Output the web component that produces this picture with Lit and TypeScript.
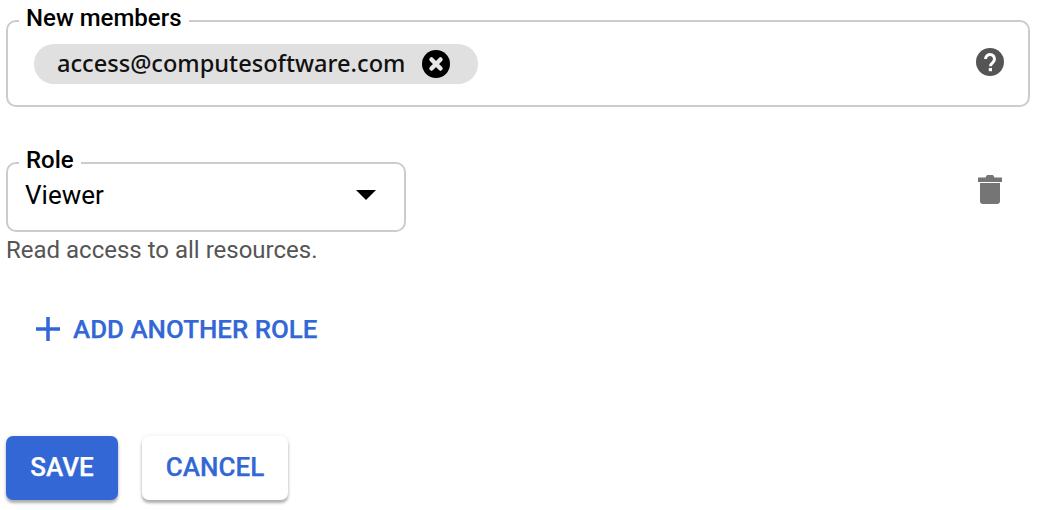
import { LitElement, html, css } from 'lit';
import { customElement } from 'lit/decorators.js';

@customElement('app-root')
export class AppRoot extends LitElement {
  static styles = css`
    :host {
      display: block;
      width: 1040px;
      height: 510px;
      overflow: hidden;
      background: #ffffff;
      font-family: Roboto, "Liberation Sans", sans-serif;
      color: #000000;
    }

    .page {
      display: flex;
      flex-direction: column;
      padding: 6px 10px 0 6px;
    }

    fieldset {
      margin: 0;
      min-width: 0;
      border: 2px solid #cccccc;
      border-radius: 10px;
    }

    legend {
      padding: 0 7px 6px 7px;
      font-size: 24px;
      line-height: 24px;
      font-weight: 500;
    }

    .members {
      display: flex;
      align-items: center;
      justify-content: space-between;
      height: 101px;
      box-sizing: border-box;
      padding: 8px 24px 0 26px;
    }

    .members legend {
      margin-left: -15px;
    }

    .chip {
      display: flex;
      align-items: center;
      gap: 17px;
      height: 40px;
      padding: 0 28px 0 23px;
      border-radius: 20px;
      background: #e0e0e0;
      font-family: "Noto Sans", sans-serif;
      font-size: 23.6px;
      font-weight: 500;
      color: #111111;
    }

    .chip-text {
      padding-bottom: 3px;
    }

    .help {
      margin-bottom: 4px;
    }

    .role-row {
      display: flex;
      align-items: flex-start;
      justify-content: space-between;
      margin-top: 41px;
      padding-right: 28px;
    }

    .role {
      display: flex;
      align-items: center;
      justify-content: space-between;
      width: 400px;
      height: 84px;
      box-sizing: border-box;
      padding: 0 28px 18px 17px;
    }

    .role legend {
      margin-left: -6px;
    }

    .viewer {
      font-size: 26px;
    }

    .trash {
      margin-top: 27px;
    }

    .helper {
      margin-top: 4px;
      font-size: 24px;
      line-height: 28px;
      color: #555555;
    }

    .add {
      display: flex;
      align-items: center;
      gap: 13px;
      margin: 50px 0 0 30px;
      font-size: 25.9px;
      line-height: 30px;
      font-weight: 500;
      color: #3367d6;
      -webkit-text-stroke: 0.25px currentColor;
    }

    .actions {
      display: flex;
      gap: 24px;
      margin-top: 92px;
    }

    .btn {
      display: flex;
      align-items: center;
      justify-content: center;
      height: 64px;
      padding: 0 0 2px;
      border: none;
      border-radius: 7px;
      font-family: inherit;
      font-size: 26px;
      font-weight: 500;
      -webkit-text-stroke: 0.25px currentColor;
      box-shadow: 0 3px 3px rgba(0, 0, 0, 0.3), 0 0 5px rgba(0, 0, 0, 0.08);
    }

    .save {
      width: 112px;
      background: #3367d6;
      color: #ffffff;
    }

    .cancel {
      width: 146px;
      background: #ffffff;
      color: #3367d6;
    }

    svg {
      display: block;
    }
  `;

  render() {
    return html`
      <div class="page">
        <fieldset class="members">
          <legend>New members</legend>
          <div class="chip">
            <span class="chip-text">access@computesoftware.com</span>
            <svg width="28" height="28" viewBox="0 0 28 28">
              <circle cx="14" cy="14" r="14" fill="#000"></circle>
              <path d="M9.500 9.500l9 9M18.500 9.500l-9 9" stroke="#e8e8e8" stroke-width="4.500" stroke-linecap="round"></path>
            </svg>
          </div>
          <svg class="help" width="28" height="28" viewBox="0 0 28 28">
            <circle cx="14" cy="14" r="14" fill="#555555"></circle>
            <path d="M9.500 11a4.500 4.500 0 1 1 7.400 3.400c-1.500 1.300-2.400 2-2.400 3.800" fill="none" stroke="#fff" stroke-width="3"></path>
            <rect x="12.800" y="20" width="3.200" height="3.200" fill="#fff"></rect>
          </svg>
        </fieldset>

        <div class="role-row">
          <fieldset class="role">
            <legend>Role</legend>
            <span class="viewer">Viewer</span>
            <svg width="20" height="10" viewBox="0 0 20 10">
              <path d="M0 0h20L10 10z" fill="#000"></path>
            </svg>
          </fieldset>
          <svg class="trash" width="24" height="29" viewBox="0 0 24 29" fill="#757575">
            <path d="M2 8h20v18a3 3 0 0 1-3 3H5a3 3 0 0 1-3-3z"></path>
            <path d="M0 2.500h7.500L9 0h6l1.500 2.500H24V7H0z"></path>
          </svg>
        </div>

        <div class="helper">Read access to all resources.</div>

        <div class="add">
          <svg width="24" height="24" viewBox="0 0 24 24">
            <path d="M12 0v24M0 12h24" stroke="#3367d6" stroke-width="3.500"></path>
          </svg>
          <span>ADD ANOTHER ROLE</span>
        </div>

        <div class="actions">
          <button class="btn save">SAVE</button>
          <button class="btn cancel">CANCEL</button>
        </div>
      </div>
    `;
  }
}
